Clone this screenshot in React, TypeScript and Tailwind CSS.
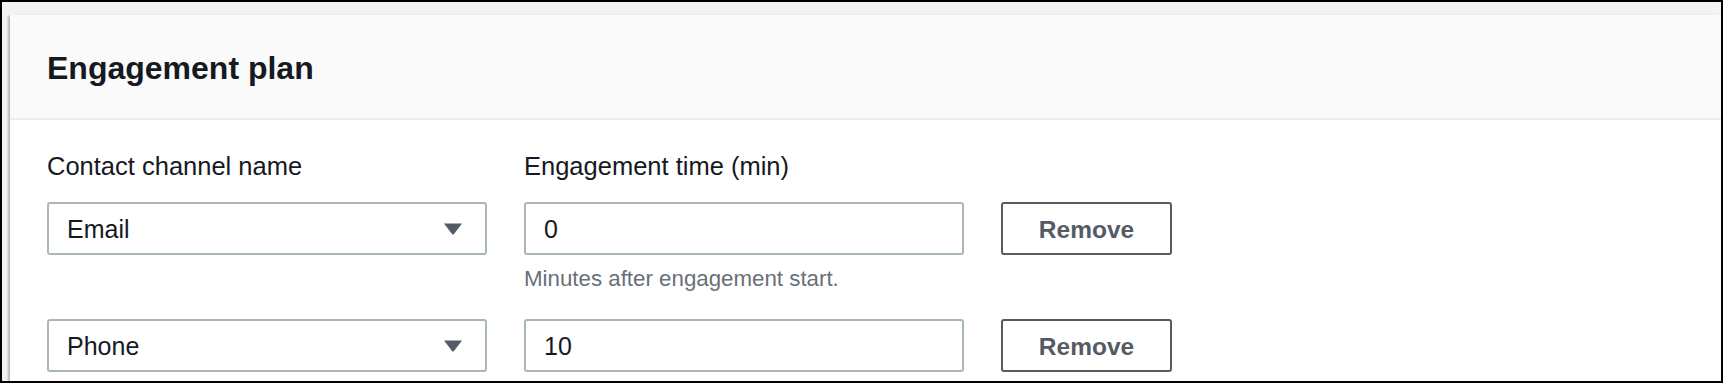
import React from "react";

const font = { fontFamily: '"Liberation Sans", Arial, sans-serif' };

function Caret() {
  return (
    <svg width="20" height="13" viewBox="0 0 20 13" className="shrink-0">
      <path d="M1 1.5 H19 L11 12 Q10 13 9 12 Z" fill="#545b64" />
    </svg>
  );
}

function Select({ value }: { value: string }) {
  return (
    <div className="w-[440px] h-[53px] border-2 border-[#aab7b8] rounded-[3px] bg-white pl-[18px] pr-[22px] flex items-center justify-between text-[25px] text-[#16191f]">
      <span className="pt-[2px]">{value}</span>
      <Caret />
    </div>
  );
}

function Input({ value }: { value: string }) {
  return (
    <div className="w-[440px] h-[53px] border-2 border-[#aab7b8] rounded-[3px] bg-white pl-[18px] pt-[2px] flex items-center text-[25px] text-[#16191f]">
      {value}
    </div>
  );
}

function RemoveButton() {
  return (
    <div className="w-[171px] h-[53px] border-2 border-[#545b64] rounded-[3px] bg-white pt-[3px] flex items-center justify-center text-[24.5px] font-bold text-[#545b64]">
      Remove
    </div>
  );
}

export default function App() {
  return (
    <div className="w-[1724px] h-[384px] bg-white" style={font}>
      <div className="w-[1723px] h-[383px] border-2 border-black bg-[#f2f3f3] overflow-hidden pt-[13px] pl-[8px]">
        <div className="bg-white h-full shadow-[-2px_1px_2px_0_rgba(0,28,36,0.28)]">
          <div className="h-[105px] bg-[#fafafa] border-b-2 border-[#eaeded] px-[37px] pt-[2px] flex items-center">
            <h2 className="text-[32px] font-bold text-[#16191f] leading-[40px]">Engagement plan</h2>
          </div>
          <div className="px-[37px] pt-[30px]">
            <div className="flex gap-[37px] text-[25.5px] leading-[32px] text-[#16191f]">
              <div className="w-[440px]">Contact channel name</div>
              <div className="w-[440px]">Engagement time (min)</div>
            </div>
            <div className="mt-[20px] flex items-start gap-[37px]">
              <Select value="Email" />
              <div className="flex flex-col">
                <Input value="0" />
                <div className="mt-[10px] text-[22.3px] leading-[28px] text-[#687078]">
                  Minutes after engagement start.
                </div>
              </div>
              <RemoveButton />
            </div>
            <div className="mt-[26px] flex items-start gap-[37px]">
              <Select value="Phone" />
              <Input value="10" />
              <RemoveButton />
            </div>
          </div>
        </div>
      </div>
    </div>
  );
}
